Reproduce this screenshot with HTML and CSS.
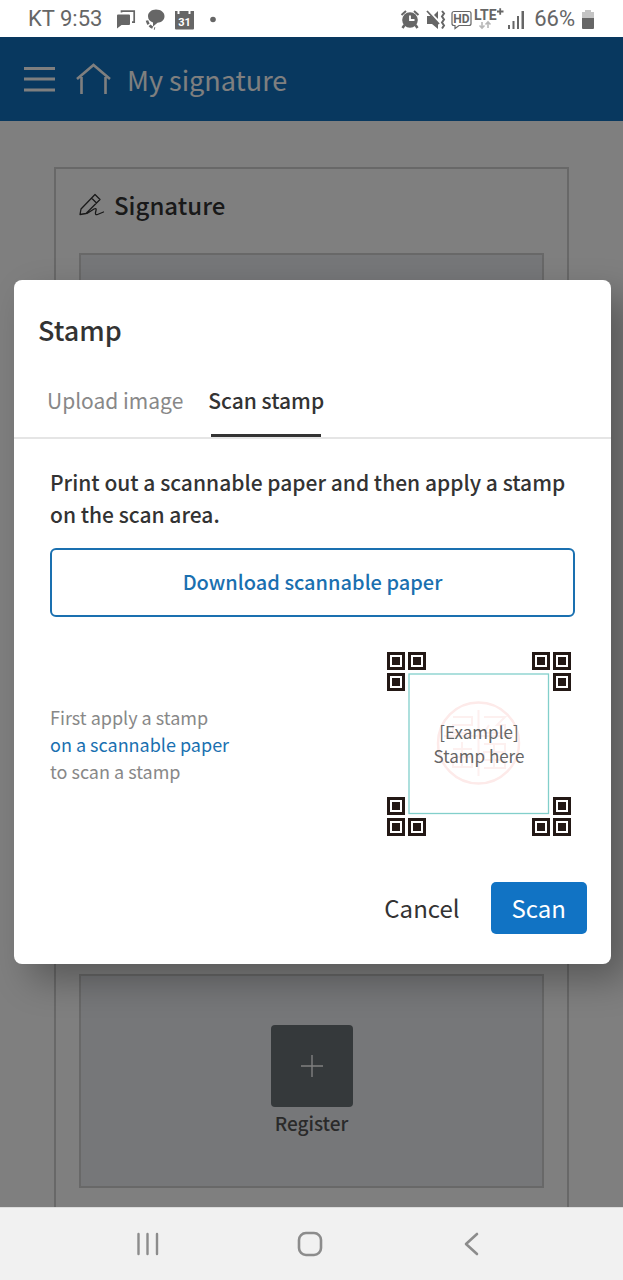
FILE: index.html
```
<!DOCTYPE html>
<html lang="en">
<head>
<meta charset="utf-8">
<meta name="viewport" content="width=device-width, initial-scale=1">
<title>My signature</title>
<link rel="stylesheet" href="styles.css">
</head>
<body>
<div class="device">
  <div class="status">
    <div class="status-group">
      <span class="status-text">KT 9:53</span>
      <svg class="status-icons" width="104" height="24" viewBox="0 0 104 24" fill="currentColor" aria-hidden="true">
        <path d="M3 7.500h11a1 1 0 0 1 1 1V17a1 1 0 0 1-1 1H6.500L2 21.500v-13a1 1 0 0 1 1-1z"/>
        <path d="M6.500 5.500V4.200h12.700v11H17" fill="none" stroke="currentColor" stroke-width="1.700"/>
        <path d="M41 2.500c5 0 8.500 2.800 8.500 6.800s-3.500 6.300-7 6.500L38 19.500v-4c-3-.8-5-3-5-6.200 0-4 3.500-6.800 8-6.800z"/>
        <path d="M32 13.500c1 4 3.500 6.800 8 8" fill="none" stroke="currentColor" stroke-width="2.600" stroke-dasharray="4 1.500"/>
        <path d="M60 4h2.500v3h2V4h9v3h2V4H79v17.500a1 1 0 0 1-1 1H61a1 1 0 0 1-1-1z"/>
        <text class="calendar-day" x="69.500" y="18.500" text-anchor="middle">31</text>
        <circle cx="98" cy="12.500" r="2.800"/>
      </svg>
    </div>
    <div class="status-group status-right">
      <svg class="status-icons" width="128" height="24" viewBox="0 0 128 24" fill="currentColor" aria-hidden="true">
        <circle cx="10" cy="13" r="7.800"/>
        <path d="M4.500 18 2.500 21M15.500 18l2 3" stroke="currentColor" stroke-width="2.500"/>
        <path d="M1.500 8 6 4M18.500 8 14 4" stroke="currentColor" stroke-width="2"/>
        <path d="M10 8.500V13h4.500" fill="none" stroke="#fff" stroke-width="1.800"/>
        <path d="M27 9h4l7 7v6l-6-5h-5zM34 8l4-4v8z"/>
        <path d="m27 4 12 13" stroke="currentColor" stroke-width="1.800"/>
        <path d="m42 4 2 2.500-2 3 2 3-2 3 2 3-2 3" fill="none" stroke="currentColor" stroke-width="2"/>
        <path d="M54 4.500h15a2 2 0 0 1 2 2v10a2 2 0 0 1-2 2H59l-4 3v-3h-1a2 2 0 0 1-2-2v-10a2 2 0 0 1 2-2z" fill="none" stroke="currentColor" stroke-width="1.200"/>
        <text class="hd" x="61.500" y="15.500" text-anchor="middle">HD</text>
        <text class="lte" x="74" y="13">LTE</text>
        <path d="M97 4.500h6.500M100.200 1.200v6.500" stroke="currentColor" stroke-width="1.800"/>
        <path d="M82 15v5m-2.500-1.500 2.500 2.500 2.500-2.500M88 21v-5m-2.500 1.500 2.500-2.500 2.500 2.500" fill="none" stroke="#b8b8b8" stroke-width="1.600"/>
        <path d="M108 18h2v4h-2zM112.500 14h2v8h-2zM117 9h2v13h-2zM121.500 4h2.500v18h-2.500z"/>
      </svg>
      <span class="status-text">66%</span>
      <svg width="14" height="24" viewBox="0 0 14 24" aria-hidden="true">
        <path d="M4 3h6v2h3v6H1V5h3z" fill="#c4c4c4"/>
        <path d="M1 11h12v10a1 1 0 0 1-1 1H2a1 1 0 0 1-1-1z" fill="#666"/>
      </svg>
    </div>
  </div>

  <div class="screen">
    <div class="page">
      <header class="topbar">
        <button class="icon-button" type="button" aria-label="Menu">
          <svg width="32" height="32" viewBox="0 0 32 32" fill="none" stroke="currentColor" stroke-width="3"><path d="M0 5.500h31M0 16h31M0 27h31"/></svg>
        </button>
        <a class="home" href="#" aria-label="Home">
          <svg width="36" height="32" viewBox="0 0 36 32" fill="none" stroke="currentColor" stroke-width="2.600"><path d="M1 16 17.500 2 34 16M5.500 14v17M29.500 14v17"/></svg>
        </a>
        <h1 class="topbar-title">My signature</h1>
      </header>
      <main class="content">
        <section class="card">
          <h2 class="card-title">
            <svg width="26" height="26" viewBox="0 0 26 26" fill="none" stroke="currentColor" stroke-width="1.300" stroke-linejoin="round" stroke-linecap="round" aria-hidden="true">
              <path d="M1 22.500 2 17 16 2.500l5 5L7 21.500zM12.500 6l5 5M8 21.500l7-4.500c2-1 2.500 0 2 1.500l-.5 2c-.3 2 .5 2.500 2 2l6-2.500"/>
            </svg>
            Signature
          </h2>
          <div class="panel panel-signature"></div>
          <div class="panel panel-register">
            <button class="register" type="button">
              <span class="register-tile">
                <svg width="24" height="24" viewBox="0 0 24 24" stroke="currentColor" stroke-width="1.400" aria-hidden="true"><path d="M1 12h22M12 1v22"/></svg>
              </span>
              <span>Register</span>
            </button>
          </div>
        </section>
      </main>
    </div>

    <div class="overlay">
      <div class="modal" role="dialog" aria-modal="true" aria-labelledby="modal-title">
        <h2 class="modal-title" id="modal-title">Stamp</h2>
        <div class="tabs" role="tablist">
          <button class="tab" type="button" role="tab" aria-selected="false">Upload image</button>
          <button class="tab tab-active" type="button" role="tab" aria-selected="true">Scan stamp</button>
        </div>
        <div class="modal-body">
          <p class="lead">Print out a scannable paper and then apply a stamp on the scan area.</p>
          <button class="download" type="button">Download scannable paper</button>
          <div class="guide">
            <p class="guide-text">First apply a stamp<br><a class="guide-link" href="#">on a scannable paper</a><br>to scan a stamp</p>
            <svg class="sample" width="184" height="184" viewBox="0 0 184 184">
              <defs>
                <g id="marker">
                  <path d="M1.500 1.500h15v15h-15z" fill="none" stroke="#231815" stroke-width="3"/>
                  <path d="M5 5h8v8H5z" fill="#231815"/>
                </g>
              </defs>
              <g fill="none" stroke="#fdf0ef" stroke-width="2">
                <circle cx="91.500" cy="91" r="40.500" stroke="#fdeae9" stroke-width="2.500"/>
                <path d="M66 65h19v8H66v8h19M97 65h21l-8 8h8v8H97M102 73l-5 8M66 97h19M66 105h19v10H66zM75 90v25M97 92h21v8H97v8h21v8H97M107 92v24M57 84h69M91.500 58v66"/>
              </g>
              <rect x="22" y="22" width="139.500" height="139.500" fill="none" stroke="#82cfcb" stroke-width="1.300"/>
              <use href="#marker"/><use href="#marker" x="21"/><use href="#marker" y="21"/>
              <use href="#marker" x="145"/><use href="#marker" x="166"/><use href="#marker" x="166" y="21"/>
              <use href="#marker" y="145"/><use href="#marker" y="166"/><use href="#marker" x="21" y="166"/>
              <use href="#marker" x="166" y="145"/><use href="#marker" x="145" y="166"/><use href="#marker" x="166" y="166"/>
              <text class="sample-text" x="92" y="87" text-anchor="middle">[Example]</text>
              <text class="sample-text" x="92" y="111" text-anchor="middle">Stamp here</text>
            </svg>
          </div>
        </div>
        <div class="actions">
          <button class="action" type="button">Cancel</button>
          <button class="action action-primary" type="button">Scan</button>
        </div>
      </div>
    </div>
  </div>

  <nav class="navbar" aria-label="System">
    <button class="nav-button" type="button" aria-label="Recent apps">
      <svg width="28" height="28" viewBox="0 0 28 28" fill="none" stroke="currentColor" stroke-width="2.400" stroke-linecap="round"><path d="M4.500 4v20M13.500 4v20M23 4v20"/></svg>
    </button>
    <button class="nav-button" type="button" aria-label="Home screen">
      <svg width="28" height="28" viewBox="0 0 28 28" fill="none" stroke="currentColor" stroke-width="2.600"><rect x="3" y="3" width="22" height="22" rx="7"/></svg>
    </button>
    <button class="nav-button" type="button" aria-label="Back">
      <svg width="28" height="28" viewBox="0 0 28 28" fill="none" stroke="currentColor" stroke-width="2.600" stroke-linecap="round" stroke-linejoin="round"><path d="M19 4 8 14l11 10"/></svg>
    </button>
  </nav>
</div>
</body>
</html>
```
FILE: styles.css
```
*, *::before, *::after { box-sizing: border-box; }

body {
  margin: 0;
  background: #fff;
  color: #333;
  font-family: "Noto Sans CJK KR", "Noto Sans", sans-serif;
}

h1, h2, p { margin: 0; }

button {
  margin: 0;
  padding: 0;
  border: 0;
  background: none;
  color: inherit;
  font: inherit;
}

a { color: inherit; text-decoration: none; }

svg { display: block; flex: none; }

.device {
  display: flex;
  flex-direction: column;
  min-height: 100vh;
}

/* System status bar */
.status {
  display: flex;
  justify-content: space-between;
  align-items: center;
  height: 37px;
  padding: 0 28px;
  color: #666;
  font-family: Roboto, sans-serif;
}

.status-group { display: flex; align-items: center; gap: 13px; }
.status-right { gap: 6px; }
.status-text { font-size: 22px; line-height: 24px; }
.calendar-day { font-size: 11px; font-weight: 700; fill: #fff; }
.hd { font-size: 12px; font-weight: 700; }
.lte { font-size: 14px; font-weight: 700; }

/* App page */
.screen {
  position: relative;
  display: flex;
  flex: 1;
  overflow: hidden;
}

.page { display: flex; flex: 1; flex-direction: column; }

.topbar {
  display: flex;
  align-items: center;
  height: 84px;
  padding: 0 24px;
  background: #1071be;
  color: #fff;
}

.icon-button { margin-right: 20px; }
.home { margin-right: 15px; }
.topbar-title { padding-top: 2px; font-size: 27px; font-weight: 400; line-height: 40px; }

.content {
  display: flex;
  flex: 1;
  padding: 46px 54px 0;
}

.card {
  display: flex;
  flex: 1;
  flex-direction: column;
  padding: 0 23px 19px;
  border: 2px solid #d0d0d0;
  border-bottom: 0;
}

.card-title {
  display: flex;
  align-items: center;
  gap: 9px;
  padding: 18px 0 30px;
  font-size: 24px;
  font-weight: 500;
  line-height: 36px;
}

.panel { border: 2px solid #d0d0d0; background: #eceef2; }
.panel-signature { flex: 1; margin-bottom: 86px; }
.panel-register { display: flex; justify-content: center; padding: 49px 0 48px; }

.register {
  display: flex;
  flex-direction: column;
  align-items: center;
  gap: 1px;
  color: #555;
  font-size: 19px;
  font-weight: 500;
  line-height: 30px;
}

.register-tile {
  display: grid;
  place-items: center;
  width: 82px;
  height: 82px;
  border-radius: 4px;
  background: #6a7276;
  color: #fff;
}

/* Stamp dialog */
.overlay {
  position: absolute;
  inset: 0;
  display: flex;
  align-items: center;
  padding: 0 12px 0 14px;
  background: rgba(0, 0, 0, 0.5);
}

.modal {
  flex: 1;
  padding: 30px 0;
  border-radius: 8px;
  background: #fff;
  box-shadow: 16px 16px 36px rgba(0, 0, 0, 0.3);
}

.modal-title {
  padding: 0 24px;
  font-size: 27px;
  font-weight: 500;
  line-height: 40px;
}

.tabs {
  display: flex;
  gap: 25px;
  padding: 34px 33px 0;
  border-bottom: 2px solid #e5e5e5;
}

.tab {
  position: relative;
  padding-bottom: 21px;
  color: #888;
  font-size: 21px;
  line-height: 32px;
}

.tab-active { color: #333; font-weight: 500; }

.tab-active::after {
  content: "";
  position: absolute;
  right: 3px;
  bottom: 0;
  left: 3px;
  height: 3px;
  background: #333;
}

.modal-body { padding: 27px 36px 0; }

.lead { font-size: 21px; font-weight: 500; line-height: 32px; }

.download {
  width: 100%;
  height: 69px;
  margin-top: 18px;
  padding-bottom: 3px;
  border: 2px solid #1a70b0;
  border-radius: 6px;
  color: #1a70b0;
  font-size: 20px;
  font-weight: 500;
}

.guide {
  display: flex;
  justify-content: space-between;
  align-items: center;
  margin-top: 35px;
  padding-right: 4px;
}

.guide-text { color: #888; font-size: 18px; line-height: 27px; }
.guide-link { color: #1a70b0; }
.sample-text { fill: #666; font-size: 17px; }

.actions {
  display: flex;
  justify-content: flex-end;
  gap: 10px;
  margin-top: 46px;
  padding: 0 24px;
}

.action {
  height: 52px;
  padding: 0 21px;
  border-radius: 5px;
  font-size: 24px;
  line-height: 50px;
}

.action-primary { background: #1173c4; color: #fff; }

/* System navigation */
.navbar {
  display: flex;
  justify-content: space-between;
  align-items: center;
  height: 73px;
  padding: 0 137px 0 134px;
  border-top: 1px solid #ddd;
  background: #f1f1f1;
  color: #8c8c8c;
}
```
